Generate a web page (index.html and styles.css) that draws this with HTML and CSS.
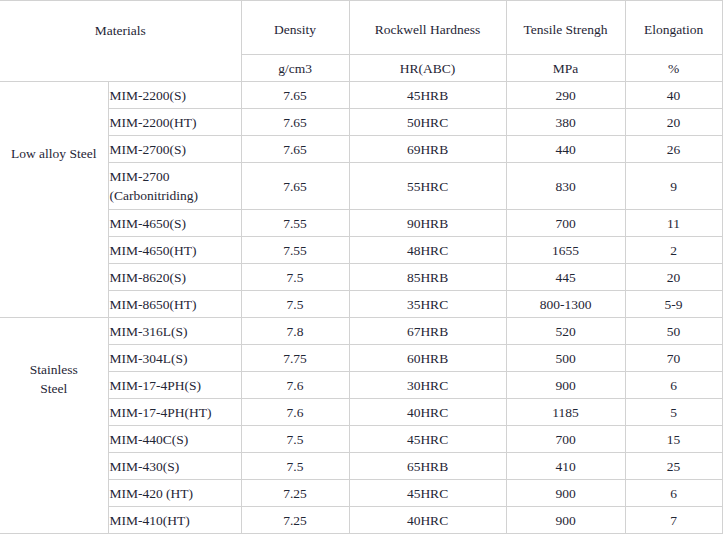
FILE: index.html
```html
<!DOCTYPE html>
<html>
<head>
<meta charset="utf-8">
<link rel="stylesheet" href="styles.css">
</head>
<body>
<table class="spec">
  <colgroup>
    <col class="c-cat">
    <col class="c-name">
    <col class="c-den">
    <col class="c-hard">
    <col class="c-ten">
    <col class="c-elo">
  </colgroup>
  <thead>
    <tr class="h1">
      <th colspan="2" rowspan="2" class="mat">Materials</th>
      <th>Density</th>
      <th>Rockwell Hardness</th>
      <th>Tensile Strengh</th>
      <th>Elongation</th>
    </tr>
    <tr class="h2">
      <th>g/cm3</th>
      <th>HR(ABC)</th>
      <th>MPa</th>
      <th>%</th>
    </tr>
  </thead>
  <tbody>
    <tr>
      <td rowspan="8" class="cat cat-low">Low alloy Steel</td>
      <td class="name">MIM-2200(S)</td><td>7.65</td><td>45HRB</td><td>290</td><td>40</td>
    </tr>
    <tr><td class="name">MIM-2200(HT)</td><td>7.65</td><td>50HRC</td><td>380</td><td>20</td></tr>
    <tr><td class="name">MIM-2700(S)</td><td>7.65</td><td>69HRB</td><td>440</td><td>26</td></tr>
    <tr class="tall"><td class="name">MIM-2700<br>(Carbonitriding)</td><td>7.65</td><td>55HRC</td><td>830</td><td>9</td></tr>
    <tr><td class="name">MIM-4650(S)</td><td>7.55</td><td>90HRB</td><td>700</td><td>11</td></tr>
    <tr><td class="name">MIM-4650(HT)</td><td>7.55</td><td>48HRC</td><td>1655</td><td>2</td></tr>
    <tr><td class="name">MIM-8620(S)</td><td>7.5</td><td>85HRB</td><td>445</td><td>20</td></tr>
    <tr><td class="name">MIM-8650(HT)</td><td>7.5</td><td>35HRC</td><td>800-1300</td><td>5-9</td></tr>
    <tr>
      <td rowspan="8" class="cat cat-stain">Stainless<br>Steel</td>
      <td class="name">MIM-316L(S)</td><td>7.8</td><td>67HRB</td><td>520</td><td>50</td>
    </tr>
    <tr><td class="name">MIM-304L(S)</td><td>7.75</td><td>60HRB</td><td>500</td><td>70</td></tr>
    <tr><td class="name">MIM-17-4PH(S)</td><td>7.6</td><td>30HRC</td><td>900</td><td>6</td></tr>
    <tr><td class="name">MIM-17-4PH(HT)</td><td>7.6</td><td>40HRC</td><td>1185</td><td>5</td></tr>
    <tr><td class="name">MIM-440C(S)</td><td>7.5</td><td>45HRC</td><td>700</td><td>15</td></tr>
    <tr><td class="name">MIM-430(S)</td><td>7.5</td><td>65HRB</td><td>410</td><td>25</td></tr>
    <tr><td class="name">MIM-420 (HT)</td><td>7.25</td><td>45HRC</td><td>900</td><td>6</td></tr>
    <tr><td class="name">MIM-410(HT)</td><td>7.25</td><td>40HRC</td><td>900</td><td>7</td></tr>
  </tbody>
</table>
</body>
</html>
```
FILE: styles.css
```css
html, body {
  margin: 0;
  padding: 0;
  background: #ffffff;
}

.spec {
  border-collapse: collapse;
  table-layout: fixed;
  width: 722px;
  font-family: "Liberation Serif", "Times New Roman", "DejaVu Serif", serif;
  font-size: 13.5px;
  color: #1f2636;
  border-top: 1px solid #d2d2d2;
}

.c-cat { width: 108px; }
.c-name { width: 133px; }
.c-den { width: 108px; }
.c-hard { width: 157px; }
.c-ten { width: 119px; }
.c-elo { width: 97px; }

.spec th,
.spec td {
  border: 1px solid #d2d2d2;
  padding: 0;
  text-align: center;
  font-weight: normal;
  font-family: "Liberation Serif", "Times New Roman", "DejaVu Serif", serif;
  line-height: 19px;
  vertical-align: middle;
}

.spec tr > :first-child {
  border-left: none;
}

.spec .h1 th {
  height: 54px;
  padding-top: 4px;
  box-sizing: border-box;
}

.spec .h2 th {
  height: 26px;
}

.spec th.mat {
  vertical-align: top;
  padding-top: 20px;
}

.spec td {
  height: 26px;
}

.spec tr.tall td {
  height: 46px;
}

.spec td.name {
  text-align: left;
  padding-left: 1px;
}

.spec td.cat {
  vertical-align: top;
}

.spec td.cat-low {
  padding-top: 62px;
}

.spec td.cat-stain {
  padding-top: 42px;
}
```
